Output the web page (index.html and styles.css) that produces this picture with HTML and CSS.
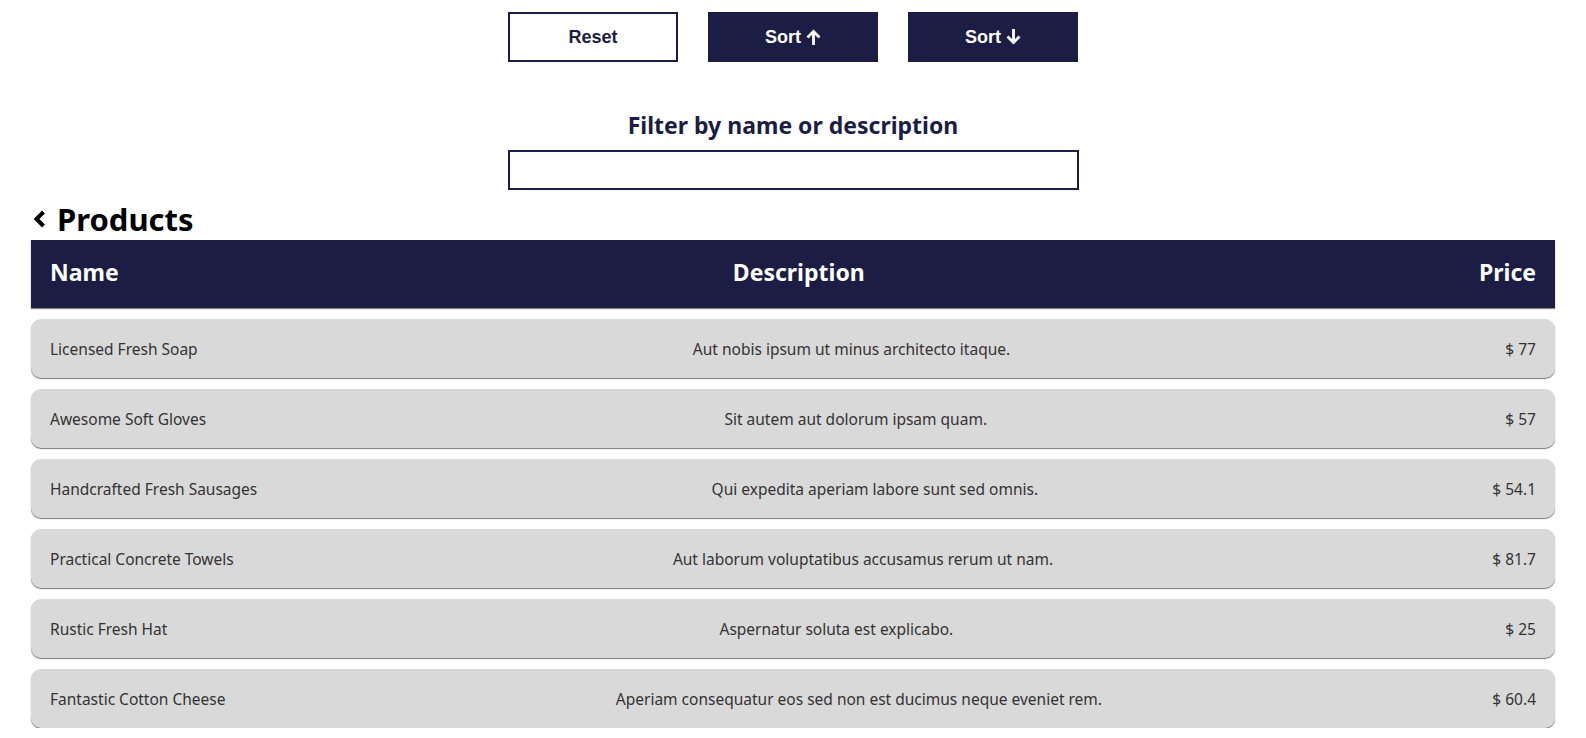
FILE: index.html
```html
<!DOCTYPE html>
<html>
<head>
<meta charset="utf-8">
<link rel="stylesheet" href="styles.css">
</head>
<body>
<div class="page">
  <div class="controls">
    <button class="btn btn-outline">Reset</button>
    <button class="btn btn-solid">Sort <svg class="arrow" viewBox="0 0 15 16" width="15" height="16"><path d="M7.5 3v13M1.5 8.5l6-6 6 6" fill="none" stroke="currentColor" stroke-width="2.8"/></svg></button>
    <button class="btn btn-solid">Sort <svg class="arrow" viewBox="0 0 15 16" width="15" height="16"><path d="M7.5 0v13M1.5 7.5l6 6 6-6" fill="none" stroke="currentColor" stroke-width="2.8"/></svg></button>
  </div>
  <div class="filter">
    <label class="filter-label" for="f">Filter by name or description</label>
    <input class="filter-input" id="f" type="text">
  </div>
  <h1 class="title"><svg class="chev" viewBox="0 0 14 20" width="14" height="20"><path d="M11.5 3L4.5 10l7 7" fill="none" stroke="currentColor" stroke-width="4"/></svg>Products</h1>
  <div class="table">
    <div class="thead">
      <div>Name</div>
      <div>Description</div>
      <div>Price</div>
    </div>
    <div class="row"><div>Licensed Fresh Soap</div><div>Aut nobis ipsum ut minus architecto itaque.</div><div>$ 77</div></div>
    <div class="row"><div>Awesome Soft Gloves</div><div>Sit autem aut dolorum ipsam quam.</div><div>$ 57</div></div>
    <div class="row"><div>Handcrafted Fresh Sausages</div><div>Qui expedita aperiam labore sunt sed omnis.</div><div>$ 54.1</div></div>
    <div class="row"><div>Practical Concrete Towels</div><div>Aut laborum voluptatibus accusamus rerum ut nam.</div><div>$ 81.7</div></div>
    <div class="row"><div>Rustic Fresh Hat</div><div>Aspernatur soluta est explicabo.</div><div>$ 25</div></div>
    <div class="row"><div>Fantastic Cotton Cheese</div><div>Aperiam consequatur eos sed non est ducimus neque eveniet rem.</div><div>$ 60.4</div></div>
  </div>
</div>
</body>
</html>
```
FILE: styles.css
```css
* { box-sizing: border-box; }
html, body { margin: 0; padding: 0; background: #fff; }
body { font-family: "Noto Sans", "Open Sans", sans-serif; color: #1b1d45; }
.page { padding: 12px 31px 0; }
.controls { display: flex; justify-content: center; gap: 30px; }
.btn {
  width: 170px; height: 50px;
  font-family: "Liberation Sans", Arial, sans-serif;
  font-size: 18px; font-weight: bold;
  border: 2px solid #1b1d45;
  display: flex; align-items: center; justify-content: center; gap: 5px;
  padding: 0; cursor: pointer;
}
.btn-outline { background: #fff; color: #1b1d45; }
.btn-solid { background: #1b1d45; color: #fff; }
.arrow { display: block; margin-top: -1px; }
.filter { display: flex; flex-direction: column; align-items: center; margin-top: 48px; }
.filter-label { font-size: 23px; font-weight: bold; color: #1b1d45; line-height: 30px; }
.filter-input { width: 571px; height: 40px; border: 2px solid #1b1d45; margin-top: 10px; outline: none; font-size: 16px; }
.title {
  display: flex; align-items: center; gap: 11px;
  margin: 8px 0 0 1px; font-size: 31px; font-weight: bold; color: #000; line-height: 42px;
}
.chev { display: block; width: 14px; height: 20px; }
.table { display: flex; flex-direction: column; gap: 11px; }
.thead, .row { display: flex; justify-content: space-between; align-items: center; padding: 0 19px; }
.thead {
  background: #1b1d45; color: #fff; height: 68px; font-size: 23px; font-weight: bold;
  padding-bottom: 4px;
  box-shadow: 0 1px 1px #888;
}
.row {
  background: #d9d9d9; color: #333; height: 59px; font-size: 15.5px;
  border-radius: 10px; box-shadow: 0 1px 1px #777;
}
```
